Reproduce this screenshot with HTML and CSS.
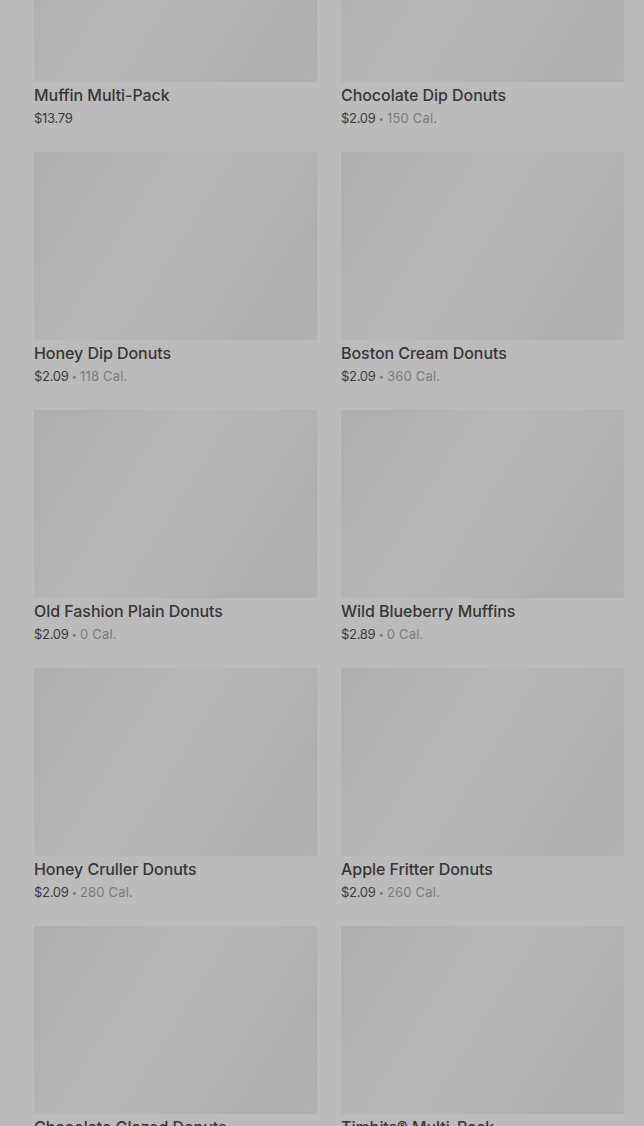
FILE: index.html
```html
<!DOCTYPE html>
<html>
<head>
<meta charset="utf-8">
<link rel="stylesheet" href="styles.css">
</head>
<body>
<div class="grid">
  <div class="card"><div class="img"></div><div class="title">Muffin Multi-Pack</div><div class="price">$13.79</div></div>
  <div class="card"><div class="img"></div><div class="title">Chocolate Dip Donuts</div><div class="price">$2.09 <span class="dot">•</span> <span class="cal">150 Cal.</span></div></div>
  <div class="card"><div class="img"></div><div class="title">Honey Dip Donuts</div><div class="price">$2.09 <span class="dot">•</span> <span class="cal">118 Cal.</span></div></div>
  <div class="card"><div class="img"></div><div class="title">Boston Cream Donuts</div><div class="price">$2.09 <span class="dot">•</span> <span class="cal">360 Cal.</span></div></div>
  <div class="card"><div class="img"></div><div class="title">Old Fashion Plain Donuts</div><div class="price">$2.09 <span class="dot">•</span> <span class="cal">0 Cal.</span></div></div>
  <div class="card"><div class="img"></div><div class="title">Wild Blueberry Muffins</div><div class="price">$2.89 <span class="dot">•</span> <span class="cal">0 Cal.</span></div></div>
  <div class="card"><div class="img"></div><div class="title">Honey Cruller Donuts</div><div class="price">$2.09 <span class="dot">•</span> <span class="cal">280 Cal.</span></div></div>
  <div class="card"><div class="img"></div><div class="title">Apple Fritter Donuts</div><div class="price">$2.09 <span class="dot">•</span> <span class="cal">260 Cal.</span></div></div>
  <div class="card"><div class="img"></div><div class="title">Chocolate Glazed Donuts</div><div class="price">$2.09 <span class="dot">•</span> <span class="cal">220 Cal.</span></div></div>
  <div class="card"><div class="img"></div><div class="title">Timbits® Multi-Pack</div><div class="price">$5.49</div></div>
</div>
</body>
</html>
```
FILE: styles.css
```css
html, body {
  margin: 0;
  padding: 0;
  background: #bbbbbb;
  overflow: hidden;
  height: 1126px;
}
body {
  font-family: Inter, "Noto Sans", sans-serif;
}
.grid {
  display: grid;
  grid-template-columns: 283px 283px;
  column-gap: 24px;
  padding: 0 20px 0 34px;
  margin-top: -106px;
}
.card {
  display: flex;
  flex-direction: column;
  padding-bottom: 24px;
}
.img {
  height: 188px;
  background: linear-gradient(122deg, #afafaf 0%, #b1b1b1 18%, #b7b7b7 40%, #b4b4b4 60%, #afafaf 82%, #b0b0b0 100%);
}
.title {
  margin-top: 3px;
  font-size: 16px;
  line-height: 20px;
  height: 20px;
  font-weight: 500;
  color: #363636;
  letter-spacing: -0.05px;
  white-space: nowrap;
}
.price {
  margin-top: 3px;
  font-size: 13px;
  line-height: 20px;
  height: 20px;
  color: #3a3a3a;
  letter-spacing: -0.3px;
  white-space: nowrap;
}
.dot {
  font-size: 9px;
  line-height: 0;
  color: #777;
  vertical-align: 1px;
}
.cal {
  color: #7a7a7a;
  letter-spacing: 0.2px;
}
```
